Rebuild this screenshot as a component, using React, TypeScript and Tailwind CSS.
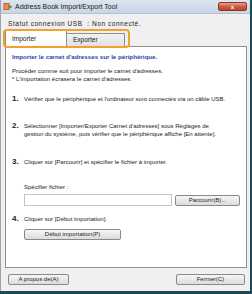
import React from "react";

const F = { fontFamily: '"Liberation Sans", Arial, sans-serif' } as React.CSSProperties;

function Btn({ children, className = "" }: { children: React.ReactNode; className?: string }) {
  return (
    <div
      className={
        "h-[11px] flex items-center justify-center border border-[#8a8a8a] rounded-[2px] bg-gradient-to-b from-[#f6f6f6] to-[#dcdcdc] text-[6px] text-[#222] " +
        className
      }
    >
      {children}
    </div>
  );
}

function Step({ n, children }: { n: string; children: React.ReactNode }) {
  return (
    <div className="flex items-start">
      <div className="w-[12px] text-[8px] font-bold leading-[8px] text-[#222]">{n}</div>
      <div className="text-[6px] leading-[8px] text-[#222]">{children}</div>
    </div>
  );
}

export default function App() {
  return (
    <div style={F} className="w-[252px] h-[294px] bg-[#1c4a58] overflow-hidden">
      <div className="w-[250px] h-[291px] bg-[#f0f0f0] border-l border-[#9aa4ae] flex flex-col">
        {/* title bar */}
        <div className="h-[14px] bg-gradient-to-b from-[#dde6f0] to-[#c7d5e6] flex items-center pl-[2px] pr-[3px] border-b border-[#b4c2d2]">
          <svg width="9" height="9" viewBox="0 0 9 9" className="mr-[3px]">
            <rect x="0.5" y="1" width="6" height="7" fill="#d9572b" />
            <rect x="1.5" y="2" width="4" height="5" fill="#f08a50" />
            <path d="M5 4 L8.5 4 L8.5 5.5 L5 5.5 Z" fill="#3aa83a" />
            <path d="M6 2.5 L9 4.75 L6 7 Z" fill="#3aa83a" />
          </svg>
          <span className="text-[7px] text-[#1a1a1a] leading-none">Address Book Import/Export Tool</span>
          <div className="ml-auto w-[29px] h-[9px] rounded-[2px] border border-[#8a3b2a] bg-gradient-to-b from-[#e8a091] via-[#cf5a43] to-[#c2432b] flex items-center justify-center">
            <span className="text-[6px] text-white font-bold leading-none">x</span>
          </div>
        </div>

        {/* status */}
        <div className="pl-[7px] mt-[6px] text-[6.5px] tracking-[0.55px] leading-[8px] text-[#222]">
          Statut connexion USB&nbsp;&nbsp;: Non connecté.
        </div>

        {/* tabs */}
        <div className="relative mt-[2px] ml-[4px] h-[16px] flex items-end">
          <div className="absolute left-[-2px] top-[-1px] w-[127px] h-[19px] border-2 border-[#f0a22e] rounded-[4px] z-10" />
          <div className="w-[62px] h-[16px] bg-white border border-b-0 border-[#8e8f8f] flex items-center pl-[6px] text-[6.5px] text-[#222] relative z-[5]">
            Importer
          </div>
          <div className="w-[58px] h-[13px] bg-gradient-to-b from-[#f2f2f2] to-[#e2e2e2] border border-l-0 border-b-0 border-[#8e8f8f] flex items-center pl-[6px] text-[6.5px] text-[#222]">
            Exporter
          </div>
        </div>

        {/* panel */}
        <div className="ml-[4px] w-[242px] h-[222px] bg-white border border-[#8e8f8f] px-[6px] pt-[6px]">
          <div className="text-[6.2px] font-bold leading-[8px] text-[#1f3fa8]">
            Importer le carnet d'adresses sur le périphérique.
          </div>
          <div className="mt-[6px] text-[6px] leading-[8px] text-[#222]">
            Procéder comme suit pour importer le carnet d'adresses.
            <br />* L'importation écrasera le carnet d'adresses.
          </div>
          <div className="mt-[12px]">
            <Step n="1.">Vérifier que le périphérique et l'ordinateur sont connectés via un câble USB.</Step>
          </div>
          <div className="mt-[19px]">
            <Step n="2.">
              Sélectionner [Importer/Exporter Carnet d'adresses] sous Réglages de
              <br />
              gestion du système, puis vérifier que le périphérique affiche [En attente].
            </Step>
          </div>
          <div className="mt-[20px]">
            <Step n="3.">Cliquer sur [Parcourir] et spécifier le fichier à importer.</Step>
          </div>
          <div className="ml-[12px] mt-[17px] text-[6px] leading-[8px] text-[#222]">Spécifier fichier :</div>
          <div className="ml-[12px] mt-[3px] flex items-center gap-[3px]">
            <div className="w-[148px] h-[12px] border border-[#c5c5c5] bg-white" />
            <Btn className="w-[65px]">Parcourir(B)...</Btn>
          </div>
          <div className="mt-[9px]">
            <Step n="4.">Cliquer sur [Début importation].</Step>
          </div>
          <div className="ml-[12px] mt-[6px]">
            <Btn className="w-[97px]">Début importation(P)</Btn>
          </div>
        </div>

        {/* bottom buttons */}
        <div className="mt-[6px] px-[7px] flex justify-between pr-[5px]">
          <Btn className="w-[61px]">A propos de(A)</Btn>
          <Btn className="w-[69px]">Fermer(C)</Btn>
        </div>
      </div>
    </div>
  );
}
